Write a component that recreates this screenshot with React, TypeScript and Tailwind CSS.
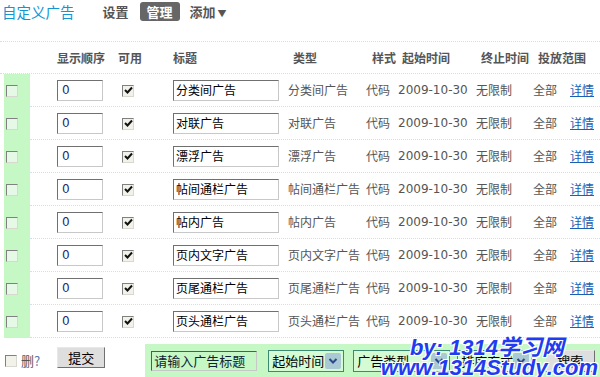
import React from "react";

const cjk = "font-['SimSun','Noto_Sans_CJK_SC',sans-serif]";

const ads = [
  "分类间广告",
  "对联广告",
  "漂浮广告",
  "帖间通栏广告",
  "帖内广告",
  "页内文字广告",
  "页尾通栏广告",
  "页头通栏广告",
];

const CheckBox: React.FC<{ checked?: boolean; green?: boolean }> = ({ checked, green }) => (
  <span
    className={`inline-flex h-[12px] w-[12px] items-center justify-center border border-t-[#808080] border-l-[#808080] border-r-[#d8d8d0] border-b-[#d8d8d0] ${
      green ? "bg-[#e6f8e6]" : "bg-[#f2f2ea]"
    }`}
  >
    {checked && (
      <svg width="9" height="9" viewBox="0 0 9 9">
        <path d="M1 4 L3.5 6.5 L8 1.5" stroke="#111" strokeWidth="2" fill="none" />
      </svg>
    )}
  </span>
);

const Arrow: React.FC = () => (
  <span className="flex h-[16px] w-[16px] items-center justify-center rounded-[2px] bg-[#a9c9d4]">
    <svg width="10" height="8" viewBox="0 0 10 8">
      <path d="M1.5 2 L5 5.5 L8.5 2" stroke="#2a4a8a" strokeWidth="2" fill="none" />
    </svg>
  </span>
);

const Select: React.FC<{ label: string; w: string }> = ({ label, w }) => (
  <div className={`flex h-[22px] ${w} items-center justify-between border border-[#3c8a74] bg-[#d4fbd4] pl-[3px] pr-[2px] text-[13px] text-black`}>
    <span>{label}</span>
    <Arrow />
  </div>
);

const App: React.FC = () => {
  return (
    <div className={`relative h-[377px] w-[600px] overflow-hidden bg-white ${cjk} text-[12px] text-[#555]`}>
      {/* top nav */}
      <div className="flex h-[41px] items-start pt-[3px]">
        <p className="ml-[2px] text-[14.5px] leading-[18px] text-[#1296d3]">自定义广告</p>
        <p className="ml-[28px] mt-[1px] font-bold text-[13px] leading-[16px] text-[#555]">设置</p>
        <span className="ml-[11px] -mt-[1px] rounded-[3px] bg-[#666] px-[7px] py-[2px] font-bold text-[13px] leading-[15px] text-white">
          管理
        </span>
        <p className="ml-[10px] mt-[1px] font-bold text-[13px] leading-[16px] text-[#555]">
          添加<span className="ml-[2px] text-[9px]">▼</span>
        </p>
      </div>

      {/* table head */}
      <div className="flex h-[33px] items-center border-y border-dotted border-[#cfe0ee] font-bold">
        <span className="ml-[57px] w-[61px]">显示顺序</span>
        <span className="w-[55px]">可用</span>
        <span className="w-[120px]">标题</span>
        <span className="w-[79px]">类型</span>
        <span className="w-[30px]">样式</span>
        <span className="w-[79px]">起始时间</span>
        <span className="w-[57px]">终止时间</span>
        <span>投放范围</span>
      </div>

      {/* rows */}
      <div className="flex">
        <div className="ml-[4px] flex w-[26px] flex-col bg-[#c6f8c6]">
          {ads.map((a) => (
            <div key={a} className="flex h-[33px] items-center pl-[2px]">
              <CheckBox green />
            </div>
          ))}
        </div>
        <div className="flex-1">
          {ads.map((a) => (
            <div key={a} className="flex h-[33px] items-center border-b border-dotted border-[#cfe0ee]">
              <div className="ml-[27px] w-[61px]">
                <div className="flex h-[21px] w-[46px] items-center border border-t-[#707070] border-l-[#707070] border-r-[#c8c8c8] border-b-[#c8c8c8] pl-[4px] font-['DejaVu_Sans',sans-serif] text-[12px] text-[#1c2a6b]">
                  0
                </div>
              </div>
              <div className="w-[55px] pl-[4px]">
                <CheckBox checked />
              </div>
              <div className="w-[115px]">
                <div className="flex h-[21px] w-[106px] items-center border border-t-[#707070] border-l-[#707070] border-r-[#c8c8c8] border-b-[#c8c8c8] pl-[2px] text-[12px] text-black">
                  {a}
                </div>
              </div>
              <span className="w-[78px] whitespace-nowrap">{a}</span>
              <span className="w-[32px]">代码</span>
              <span className="w-[78px] font-['DejaVu_Sans',sans-serif] text-[12px] text-[#555]">2009-10-30</span>
              <span className="w-[57px]">无限制</span>
              <span className="w-[37px]">全部</span>
              <a className="text-[#1a5fb4] underline">详情</a>
            </div>
          ))}
        </div>
      </div>

      {/* bottom */}
      <div className="mt-[6px] flex h-[34px] items-start">
        <div className="ml-[5px] mt-[7px] flex items-center">
          <CheckBox />
          <span className="ml-[4px] text-[13px] text-[#555]">
            删<span className="text-[#5a78a8]">?</span>
          </span>
        </div>
        <button className="ml-[17px] mt-[3px] h-[21px] w-[48px] border border-t-[#e8e8e8] border-l-[#e8e8e8] border-r-[#707070] border-b-[#707070] bg-[#dedede] text-[13px] text-black">
          提交
        </button>
        <div className="ml-[40px] flex h-[34px] flex-1 items-center gap-[11px] bg-[#c6f8c6] pl-[6px]">
          <div className="flex h-[20px] w-[106px] items-center border border-t-[#50604f] border-l-[#50604f] border-r-[#c8c8c8] border-b-[#c8c8c8] pl-[2px] text-[13px] text-[#123]">
            请输入广告标题
          </div>
          <Select label="起始时间" w="w-[76px]" />
          <div className="-ml-[2px] flex gap-[7px]">
            <Select label="广告类型" w="w-[97px]" />
            <Select label="排序方式" w="w-[75px]" />
          </div>
          <button className="ml-[2px] h-[22px] w-[50px] border border-t-[#e8e8e8] border-l-[#e8e8e8] border-r-[#707070] border-b-[#707070] bg-[#dedede] text-[13px] text-black">
            搜索
          </button>
        </div>
      </div>

      {/* watermark */}
      <div className="pointer-events-none absolute left-[374px] top-[335px] flex w-[224px] flex-col items-end font-['Liberation_Sans',sans-serif] text-[22px] font-bold italic leading-[20px] text-[#1f3cf0] [text-shadow:1px_1px_0_#fff,-1px_-1px_0_#fff,1px_-1px_0_#fff,-1px_1px_0_#fff]">
        <span className="mr-[34px]">
          by: 1314<span className="font-['Noto_Sans_CJK_SC',sans-serif]">学习网</span>
        </span>
        <span className="mt-[0px]">www.1314Study.com</span>
      </div>
    </div>
  );
};

export default App;
